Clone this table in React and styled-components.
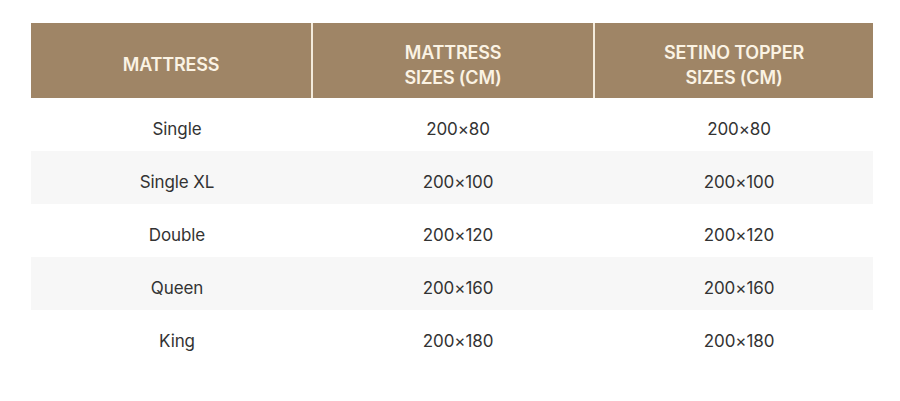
import React from 'react';
import styled, { createGlobalStyle } from 'styled-components';

const GlobalStyle = createGlobalStyle`
  html, body {
    margin: 0;
    padding: 0;
    background: #ffffff;
  }
  body {
    font-family: Inter, "Noto Sans", sans-serif;
  }
`;

const columns = ['MATTRESS', 'MATTRESS\nSIZES (CM)', 'SETINO TOPPER\nSIZES (CM)'];

const rows = [
  { name: 'Single', mattress: '200×80', topper: '200×80' },
  { name: 'Single XL', mattress: '200×100', topper: '200×100' },
  { name: 'Double', mattress: '200×120', topper: '200×120' },
  { name: 'Queen', mattress: '200×160', topper: '200×160' },
  { name: 'King', mattress: '200×180', topper: '200×180' }
];

const App = () => (
  <>
    <GlobalStyle />
    <Page>
      <SizeTable>
        <HeadRow>
          {columns.map(col => (
            <HeadCell key={col}>{col}</HeadCell>
          ))}
        </HeadRow>
        {rows.map((row, i) => (
          <BodyRow key={row.name} striped={i % 2 === 1}>
            <BodyCell>{row.name}</BodyCell>
            <BodyCell>{row.mattress}</BodyCell>
            <BodyCell>{row.topper}</BodyCell>
          </BodyRow>
        ))}
      </SizeTable>
    </Page>
  </>
);

const Page = styled.div`
  width: 900px;
  height: 401px;
  padding: 23px 27px 0 31px;
  box-sizing: border-box;
  background: #ffffff;
`;

const SizeTable = styled.div`
  width: 842px;
  display: flex;
  flex-direction: column;
`;

const HeadRow = styled.div`
  display: grid;
  grid-template-columns: 280px 282px 280px;
  height: 75px;
  background: #9f8566;
`;

const HeadCell = styled.div`
  display: flex;
  align-items: center;
  justify-content: center;
  box-sizing: border-box;
  padding-top: 8px;
  text-align: center;
  white-space: pre-line;
  color: #fbf3e4;
  font-size: 18px;
  font-weight: 600;
  line-height: 25px;
  letter-spacing: -0.2px;

  & + & {
    border-left: 2px solid #f3ebdc;
  }
`;

const BodyRow = styled.div.withConfig({
  shouldForwardProp: prop => prop !== 'striped'
})`
  display: grid;
  grid-template-columns: 280px 282px 280px;
  height: 53px;
  background: ${({ striped }) => (striped ? '#f7f7f7' : 'transparent')};
`;

const BodyCell = styled.div`
  display: flex;
  align-items: center;
  justify-content: center;
  box-sizing: border-box;
  padding: 8px 0 0 12px;
  color: #333333;
  font-size: 17px;
  letter-spacing: -0.1px;
`;

export default App;
